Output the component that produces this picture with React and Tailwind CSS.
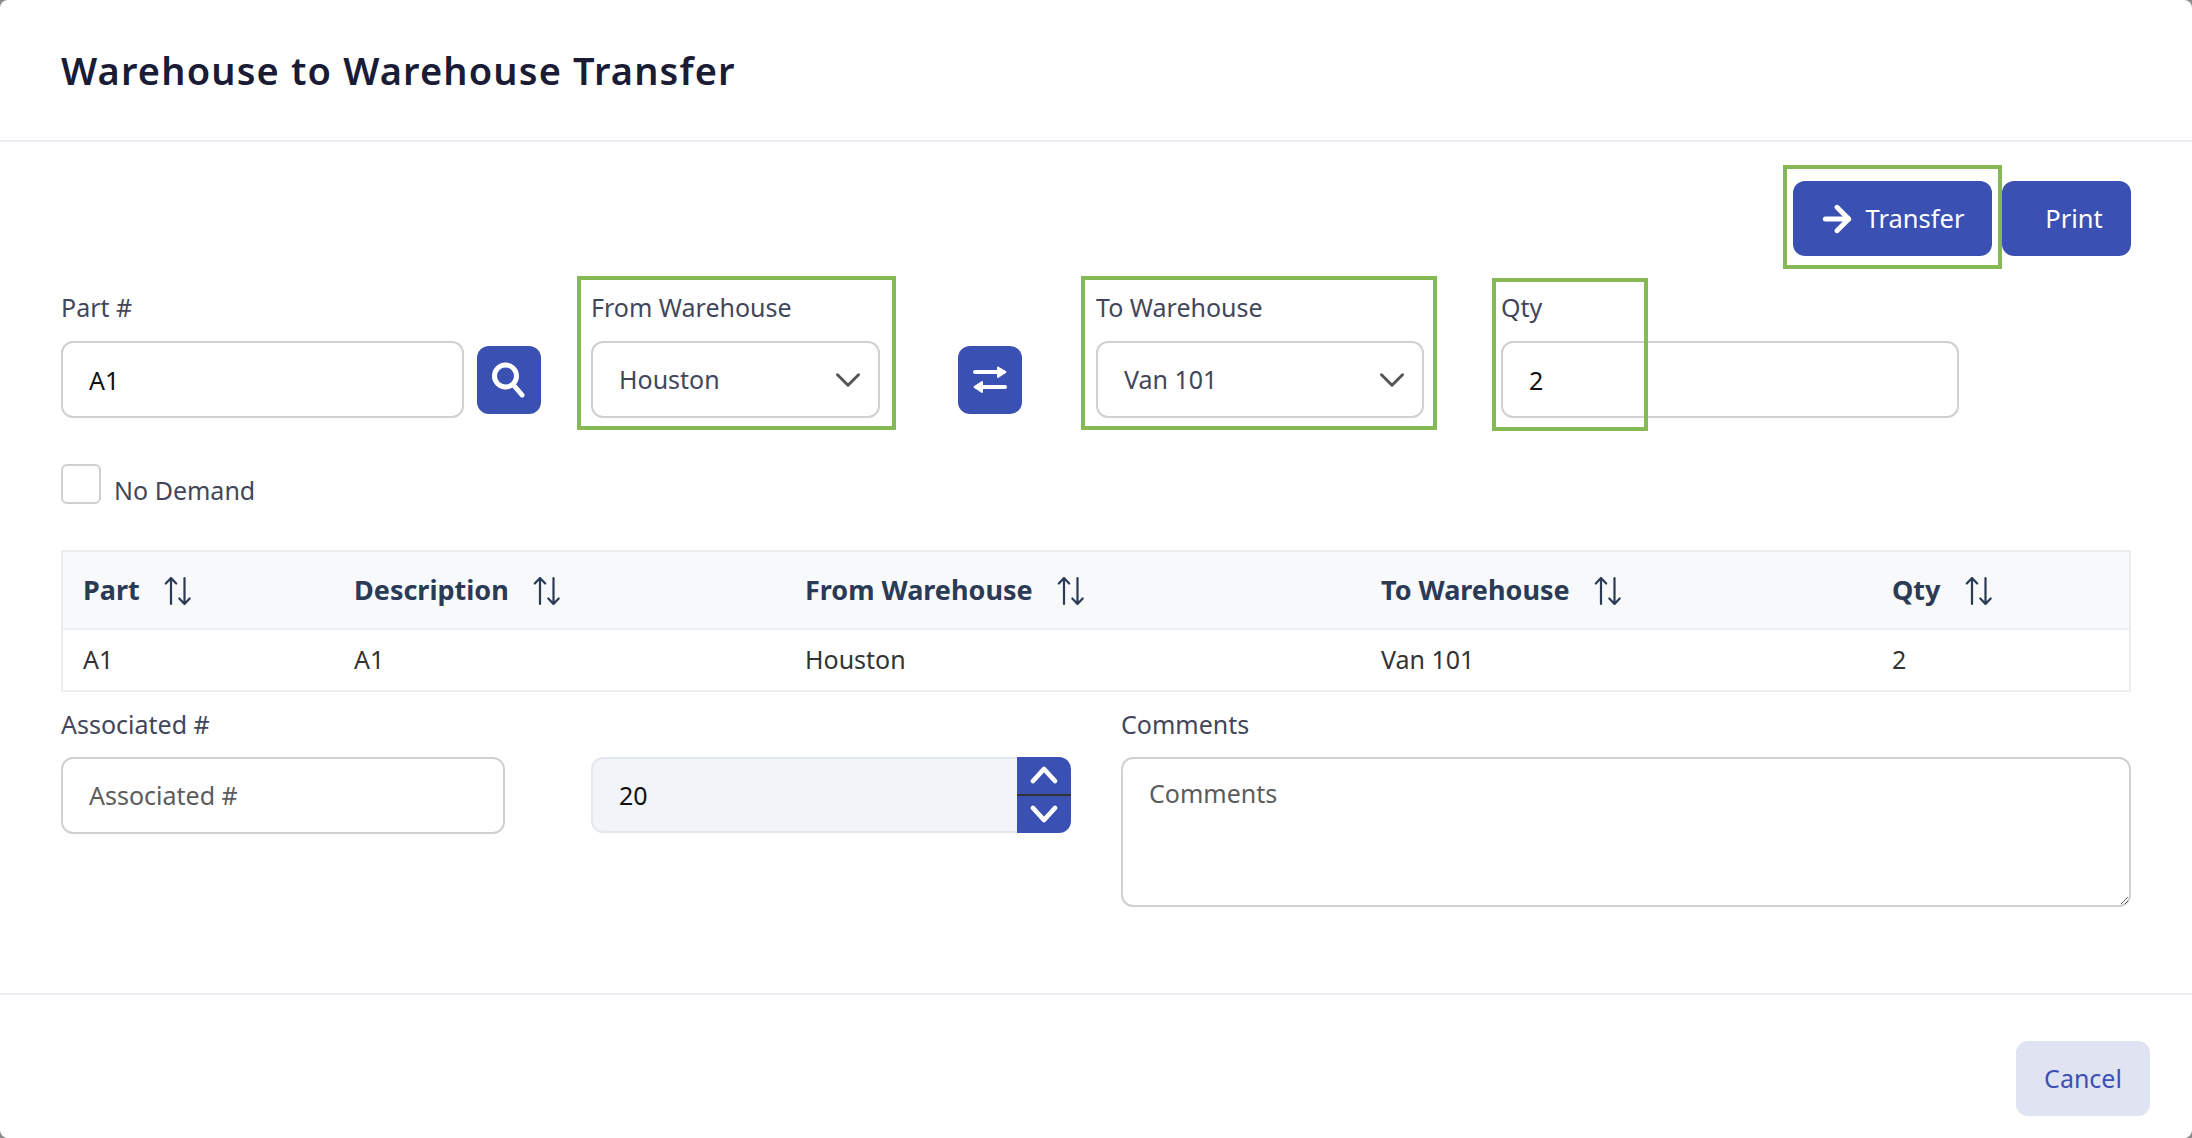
import React from "react";
import { ArrowRight, ChevronDown } from "lucide-react";

function SortIcon() {
  return (
    <svg width="28" height="30" viewBox="0 0 28 30" fill="none" stroke="#2b3a55" strokeWidth="2.2" strokeLinecap="round" strokeLinejoin="round" className="shrink-0">
      <path d="M7 28V2M1.800 7.500 7 2l5.200 5.500" />
      <path d="M20.500 2v26M15.300 22.500l5.200 5.500 5.200-5.500" />
    </svg>
  );
}

function SwapIcon() {
  return (
    <svg width="34" height="28" viewBox="0 0 34 28" fill="white" stroke="white" strokeLinecap="round" strokeLinejoin="round">
      <path d="M2 6h28" strokeWidth="4" fill="none" />
      <path d="M25 1.500 32.500 6 25 11z" strokeWidth="2" />
      <path d="M32 21H4" strokeWidth="4" fill="none" />
      <path d="M9 16 1.500 21 9 26z" strokeWidth="2" />
    </svg>
  );
}

function SearchIcon() {
  return (
    <svg width="34" height="36" viewBox="0 0 34 36" fill="none" stroke="white" strokeWidth="5" strokeLinecap="round">
      <circle cx="13.500" cy="14" r="11" />
      <path d="M21.500 23 30 33" />
    </svg>
  );
}

function SpinChevron({ d }) {
  return (
    <svg width="30" height="20" viewBox="0 0 30 20" fill="none" stroke="white" strokeWidth="4.800" strokeLinecap="round" strokeLinejoin="round">
      <path d={d} />
    </svg>
  );
}

function Th({ label }) {
  return (
    <div className="flex items-center gap-[24px] pt-[2px] text-[27px] font-bold text-[#2b3a55]">
      <span>{label}</span>
      <SortIcon />
    </div>
  );
}

const inputCls = "block h-[77px] rounded-[12px] border-2 border-[#d0d0d0] bg-white px-[26px] text-[25px] text-[#111] outline-none placeholder:text-[#5c5c5c]";
const labelCls = "block text-[25px] leading-[36px] text-[#43465a]";
const green = "pointer-events-none absolute border-[4px] border-[#86b854]";
const cols = "grid grid-cols-[271px_451px_576px_511px_1fr] items-center pl-[20px]";

export default function App() {
  return (
    <div className="h-[1138px] w-[2192px] bg-[#8a8a8a]">
      <div className="flex h-full flex-col overflow-hidden rounded-[8px] bg-white font-['Noto_Sans',sans-serif] text-[25px] text-[#333]">
        <header className="flex h-[142px] shrink-0 items-center border-b-2 border-[#ebedf3] px-[61px]">
          <h1 className="text-[38px] font-semibold tracking-[1.150px] text-[#1a1c36]">Warehouse to Warehouse Transfer</h1>
        </header>

        <main className="flex-1 px-[61px]">
          <div className="flex justify-end gap-[10px] pt-[39px]">
            <div className="relative">
              <button className="flex h-[75px] w-[199px] items-center justify-center gap-[9px] rounded-[12px] bg-[#3a50b3] pr-[4px] text-[25.500px] text-white">
                <ArrowRight size={40} strokeWidth={3} />
                Transfer
              </button>
              <div className={green + " -top-[16px] -right-[10px] -bottom-[13px] -left-[10px]"} />
            </div>
            <button className="h-[75px] w-[129px] rounded-[12px] bg-[#3a50b3] pl-[15px] text-[25.500px] text-white">Print</button>
          </div>

          <div className="mt-[33px] flex items-start">
            <div className="w-[403px]">
              <label className={labelCls}>Part #</label>
              <input className={inputCls + " mt-[16px] w-full"} defaultValue="A1" readOnly />
            </div>
            <button className="mt-[57px] ml-[13px] flex h-[68px] w-[64px] items-center justify-center rounded-[12px] bg-[#3a50b3]">
              <SearchIcon />
            </button>

            <div className="relative ml-[50px] w-[289px]">
              <label className={labelCls}>From Warehouse</label>
              <div className={inputCls + " mt-[16px] flex items-center justify-between pt-[1px] pr-[9px] text-[#43465a]"}>
                <span>Houston</span>
                <ChevronDown size={42} strokeWidth={1.700} className="text-[#555]" />
              </div>
              <div className={green + " -top-[13px] -right-[16px] -bottom-[12px] -left-[14px]"} />
            </div>

            <button className="mt-[57px] ml-[78px] flex h-[68px] w-[64px] items-center justify-center rounded-[12px] bg-[#3a50b3]">
              <SwapIcon />
            </button>

            <div className="relative ml-[74px] w-[328px]">
              <label className={labelCls}>To Warehouse</label>
              <div className={inputCls + " mt-[16px] flex items-center justify-between pt-[1px] pr-[9px] text-[#43465a]"}>
                <span>Van 101</span>
                <ChevronDown size={42} strokeWidth={1.700} className="text-[#555]" />
              </div>
              <div className={green + " -top-[13px] -right-[13px] -bottom-[12px] -left-[15px]"} />
            </div>

            <div className="relative ml-[77px] w-[458px]">
              <label className={labelCls}>Qty</label>
              <input className={inputCls + " mt-[16px] w-full"} defaultValue="2" readOnly />
              <div className={green + " -top-[11px] -bottom-[13px] -left-[9px] w-[156px]"} />
            </div>
          </div>

          <label className="mt-[46px] flex items-start gap-[13px]">
            <span className="block h-[40px] w-[40px] rounded-[6px] border-2 border-[#d0d0d0] bg-white" />
            <span className="mt-[8px] text-[#43465a]">No Demand</span>
          </label>

          <div className="mt-[40px] border-x-2 border-b-2 border-[#ebedf1]">
            <div className={cols + " h-[80px] border-y-2 border-[#ebedf1] bg-[#f8f9fa]"}>
              <Th label="Part" />
              <Th label="Description" />
              <Th label="From Warehouse" />
              <Th label="To Warehouse" />
              <Th label="Qty" />
            </div>
            <div className={cols + " h-[60px] text-[#333]"}>
              <div>A1</div>
              <div>A1</div>
              <div>Houston</div>
              <div>Van 101</div>
              <div>2</div>
            </div>
          </div>

          <div className="mt-[14px] flex items-start">
            <div className="w-[444px]">
              <label className={labelCls}>Associated #</label>
              <input className={inputCls + " mt-[15px] w-full"} placeholder="Associated #" readOnly />
            </div>
            <div className="mt-[51px] ml-[86px] flex h-[76px] w-[480px]">
              <input className="h-full min-w-0 flex-1 rounded-l-[12px] border-2 border-r-0 border-[#e4e7ec] bg-[#f1f4f8] px-[26px] text-[25px] text-[#111] outline-none" defaultValue="20" readOnly />
              <div className="flex w-[54px] shrink-0 flex-col">
                <button className="flex flex-1 items-center justify-center rounded-tr-[12px] border-b-[1px] border-[#333] bg-[#3a50b3]">
                  <SpinChevron d="M4 16 15 4l11 12" />
                </button>
                <button className="flex flex-1 items-center justify-center rounded-br-[12px] border-t-[1px] border-[#333] bg-[#3a50b3]">
                  <SpinChevron d="M4 4l11 12L26 4" />
                </button>
              </div>
            </div>
            <div className="ml-[50px] flex-1">
              <label className={labelCls}>Comments</label>
              <textarea className={inputCls + " mt-[15px] h-[150px] w-full pt-[16px]"} placeholder="Comments" readOnly />
            </div>
          </div>
        </main>

        <footer className="flex h-[145px] shrink-0 items-start justify-end border-t-2 border-[#ebedf3] pt-[46px] pr-[42px]">
          <button className="h-[75px] w-[134px] rounded-[12px] bg-[#e0e3f2] text-[25px] text-[#3a50b3]">Cancel</button>
        </footer>
      </div>
    </div>
  );
}
